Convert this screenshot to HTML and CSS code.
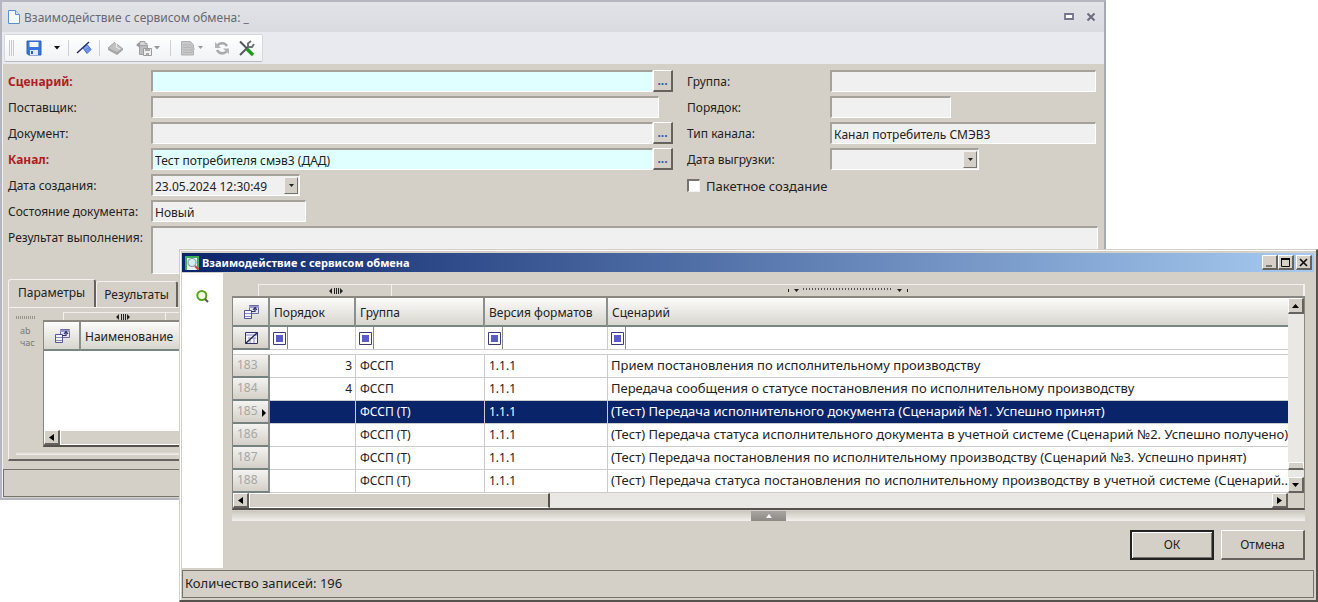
FILE: index.html
```html
<!DOCTYPE html>
<html lang="ru">
<head>
<meta charset="utf-8">
<title>Взаимодействие с сервисом обмена</title>
<link rel="stylesheet" href="styles.css">
</head>
<body>
<svg class="defs" aria-hidden="true">
  <symbol id="chooser" viewBox="0 0 16 16">
    <path d="M6.500 1.500h9v8h-9z" fill="#e6e6f4" stroke="#6a6aa4"/>
    <path d="M6 2h10v2H6z" fill="#9a9ac8"/>
    <path d="M1.500 6.500h7v8h-7z" fill="#f4f4fb" stroke="#55558f"/>
    <path d="M2 9h6v1H2zM2 12h6v1H2z" fill="#8a8abc"/>
    <path d="M8 7.500h4V5M10 6l2-2.500L14 6" fill="none" stroke="#303068" stroke-width="1.200"/>
  </symbol>
  <symbol id="filter" viewBox="0 0 16 16">
    <path d="M2.500 2.500h12v11h-12z" fill="#f2f2fa" stroke="#33336e"/>
    <path d="M3 5h11M5 8h8M7 10v3M11 8v5" stroke="#8c8cc0" fill="none"/>
    <path d="M2.500 13.500l12-11" stroke="#222258" stroke-width="1.400"/>
  </symbol>
  <symbol id="mode" viewBox="0 0 13 13">
    <path d="M.5.5h12v12H.5z" fill="#fff" stroke="#3c3c7c"/>
    <path d="M3 3h7v7H3z" fill="#5c5cc8"/>
  </symbol>
</svg>

<main class="desktop">
<section class="doc">
  <header class="doc-title">
    <svg width="14" height="16" viewBox="0 0 14 16"><path d="M1.500 1.500h7l4 4v9h-11z" fill="#f4faff" stroke="#5d8fd0"/><path d="M8.500 1.500v4h4" fill="#cfe2f8" stroke="#5d8fd0"/></svg>
    <span class="doc-name">Взаимодействие с сервисом обмена: _</span>
    <button class="plain" aria-label="Развернуть"><svg width="10" height="10" viewBox="0 0 10 10"><path d="M1 2h8v5H1z" fill="#fff" stroke="#74748a" stroke-width="1.800"/></svg></button>
    <button class="plain" aria-label="Закрыть"><svg width="10" height="10" viewBox="0 0 10 10"><path d="M1.500 1.500l7 7M8.500 1.500l-7 7" stroke="#6c6c82" stroke-width="2"/></svg></button>
  </header>
  <div class="toolbar-row">
    <div class="toolbar">
      <span class="grip"></span>
      <button class="tool" aria-label="Сохранить"><svg width="16" height="16" viewBox="0 0 16 16"><path d="M1 1h14v14H2.500L1 13.500z" fill="#3a76d8" stroke="#2f5fb8"/><path d="M3.500 2h9v5h-9z" fill="#f2f7ff"/><path d="M4 10h8v5H4z" fill="#dfe9f8"/><path d="M5 11h2v3H5z" fill="#2f5fb8"/></svg></button>
      <button class="tool arrow" aria-label="Варианты сохранения"><svg width="6" height="4" viewBox="0 0 6 4"><path d="M0 0h6L3 3.500z" fill="#111"/></svg></button>
      <span class="sep"></span>
      <button class="tool" aria-label="Очистить"><svg width="16" height="16" viewBox="0 0 16 16"><path d="M7 8l4-3.500L15 9.500l-4 4z" fill="#7da5ea" stroke="#4268c8"/><path d="M1 13L13 2" stroke="#2a2a78" stroke-width="1.500"/><path d="M9 10l4-2M10 12l4-3" stroke="#4268c8" stroke-width=".6"/></svg></button>
      <span class="sep"></span>
      <button class="tool" aria-label="Печать"><svg width="18" height="16" viewBox="0 0 18 16"><path d="M1 8l7-6 3 3 5 4-6 5z" fill="#c2c2c2" stroke="#a2a2a2"/><path d="M8 2l2 2-1 3 4 2" fill="none" stroke="#efefef"/><path d="M1 8l9 4 6-4v2l-6 5-9-5z" fill="#a6a6a6"/></svg></button>
      <button class="tool wide" aria-label="Выгрузить"><svg width="26" height="17" viewBox="0 0 26 17"><path d="M3 5V3.500h2V1.500h5v2h2V7" fill="#d6d6d6" stroke="#a2a2a2"/><path d="M4.500 5.500h8v9h-8z" fill="#bcbcbc" stroke="#a0a0a0"/><path d="M1 5l4-3v6z" fill="#999"/><path d="M8.500 8.500h8v7h-8z" fill="#eee" stroke="#9c9c9c"/><path d="M10 9h5v2h-5zM11 13h3v2h-3z" fill="#aaa"/><path d="M19 6h6l-3 3.500z" fill="#999"/></svg></button>
      <span class="sep"></span>
      <button class="tool wide" aria-label="Отчёт"><svg width="24" height="16" viewBox="0 0 24 16"><path d="M1.500 1.500h9l3 3.500v10h-12z" fill="#c8c8c8" stroke="#b0b0b0"/><path d="M3 5h8M3 7.500h9M3 10h9M3 12.500h9" stroke="#b4b4b4"/><path d="M11 5l4 4-4 5z" fill="#bdbdbd"/><path d="M18 6h5l-2.500 3z" fill="#999"/></svg></button>
      <button class="tool" aria-label="Обновить"><svg width="16" height="16" viewBox="0 0 16 16"><path d="M13 6C11 2.500 6 2 3 6M3 10c2 4 7 4.500 10 1" fill="none" stroke="#aaa" stroke-width="2.600"/><path d="M1 2v6h6zM15 14V8.500H9z" fill="#b4b4b4"/></svg></button>
      <button class="tool" aria-label="Настройка"><svg width="17" height="17" viewBox="0 0 17 17"><path d="M2 15L11 6" stroke="#555a60" stroke-width="2"/><path d="M10 6.500V3.500L13 1M11 7h3l2-3" fill="none" stroke="#70757a" stroke-width="2"/><path d="M2 1.500l7 7" stroke="#555" stroke-width="2"/><path d="M9 9l6 6" stroke="#1b9a1b" stroke-width="3.400"/></svg></button>
    </div>
  </div>

  <form class="form">
    <div class="col">
      <div class="line"><label class="req" for="f1">Сценарий:</label><input id="f1" class="fld key"><button type="button" class="dots" aria-label="Выбрать сценарий">...</button></div>
      <div class="line"><label for="f2">Поставщик:</label><input id="f2" class="fld short" readonly></div>
      <div class="line"><label for="f3">Документ:</label><input id="f3" class="fld" readonly><button type="button" class="dots" aria-label="Выбрать документ">...</button></div>
      <div class="line"><label class="req" for="f4">Канал:</label><input id="f4" class="fld key" value="Тест потребителя смэв3 (ДАД)"><button type="button" class="dots" aria-label="Выбрать канал">...</button></div>
      <div class="line"><label for="f5">Дата создания:</label><span class="fld combo"><input id="f5" value="23.05.2024 12:30:49" readonly><button type="button" aria-label="Открыть календарь"><svg width="5" height="3" viewBox="0 0 5 3"><path d="M0 0h5L2.500 3z" fill="#222"/></svg></button></span></div>
      <div class="line"><label for="f6">Состояние документа:</label><input id="f6" class="fld state" value="Новый" readonly></div>
    </div>
    <div class="col">
      <div class="line"><label for="g1">Группа:</label><input id="g1" class="fld" readonly></div>
      <div class="line"><label for="g2">Порядок:</label><input id="g2" class="fld order" readonly></div>
      <div class="line"><label for="g3">Тип канала:</label><input id="g3" class="fld" value="Канал потребитель СМЭВ3" readonly></div>
      <div class="line"><label for="g4">Дата выгрузки:</label><span class="fld combo"><input id="g4" readonly><button type="button" aria-label="Открыть календарь"><svg width="5" height="3" viewBox="0 0 5 3"><path d="M0 0h5L2.500 3z" fill="#222"/></svg></button></span></div>
      <div class="line"><input type="checkbox" id="g5" class="check"><label class="check-label" for="g5">Пакетное создание</label></div>
    </div>
    <div class="line result"><label for="f7">Результат выполнения:</label><textarea id="f7" class="fld" readonly></textarea></div>
  </form>

  <div class="tabs">
    <button class="tab active">Параметры</button><button class="tab">Результаты</button>
  </div>
  <div class="panel">
    <div class="panel-body">
      <div class="side-tools">
        <span class="hgrip"></span>
        <button class="plain replace" aria-label="Замена текста"><span>ab</span><span>час</span></button>
      </div>
      <div class="params">
        <div class="strip"><span class="strip-cell"><svg width="14" height="6" viewBox="0 0 14 6"><path d="M0 3l3-3v6zM14 3l-3-3v6zM5 0h1v6H5zM7 0h1v6H7zM9 0h1v6H9z" fill="#222"/></svg></span></div>
        <div class="grid-box">
          <table class="grid">
            <thead><tr><th class="c-row"><svg width="16" height="16"><use href="#chooser"/></svg></th><th>Наименование</th></tr></thead>
          </table>
          <div class="params-empty"></div>
          <div class="hscroll"><button class="sb" aria-label="Влево"><svg width="5" height="7" viewBox="0 0 5 7"><path d="M5 0v7L0 3.500z"/></svg></button><span class="thumb full"></span></div>
        </div>
      </div>
    </div>
    <div class="splitter thin"></div>
  </div>
  <footer class="status doc-status"></footer>
</section>

<section class="dialog">
  <header class="dlg-title">
    <svg width="14" height="14" viewBox="0 0 14 14"><path d="M0 0h14v14H0z" fill="#3cae55"/><path d="M2 2h10v12H2z" fill="#e8f4f6"/><circle cx="7" cy="6.500" r="4" fill="#d4eef8" stroke="#8a9ca8" stroke-width="1.200"/><path d="M10 10l3.500 3.500" stroke="#d2453c" stroke-width="2.200"/></svg>
    <h1>Взаимодействие с сервисом обмена</h1>
    <div class="win-btns">
      <button class="wb" aria-label="Свернуть"><svg width="9" height="9" viewBox="0 0 9 9"><path d="M1 7h6v2H1z" fill="#777"/></svg></button>
      <button class="wb" aria-label="Развернуть"><svg width="9" height="9" viewBox="0 0 9 9"><path d="M.5 0v8.500h8V0z" fill="none" stroke="#111"/><path d="M0 0h9v2H0z"/></svg></button>
      <button class="wb close" aria-label="Закрыть"><svg width="9" height="9" viewBox="0 0 9 9"><path d="M1 1l7 7M8 1L1 8" stroke="#111" stroke-width="1.700"/></svg></button>
    </div>
  </header>
  <div class="dlg-main">
    <aside class="dlg-side"><button class="plain" aria-label="Поиск"><svg width="13" height="13" viewBox="0 0 13 13"><circle cx="5.800" cy="5.500" r="4.500" fill="#f4fbe8" stroke="#57a51c" stroke-width="2"/><path d="M9 9l3 3" stroke="#555" stroke-width="2"/></svg></button></aside>
    <div class="dlg-content">
      <div class="strip">
        <span class="strip-cell"><svg width="14" height="6" viewBox="0 0 14 6"><path d="M0 3l3-3v6zM14 3l-3-3v6zM5 0h1v6H5zM7 0h1v6H7zM9 0h1v6H9z" fill="#222"/></svg></span>
        <span class="strip-cell rest"><svg width="120" height="5" viewBox="0 0 120 5"><path d="M0 1h1v3H0zM6 1h5L8.500 4zM109 1h5l-2.500 3zM119 1h1v3h-1z" fill="#222"/><path d="M15 1h90" stroke="#555" stroke-width="2" stroke-dasharray="1 2"/></svg></span>
      </div>
      <div class="grid-box">
        <div class="grid-area">
          <table class="grid">
            <thead>
              <tr><th class="c-row"><svg width="16" height="16"><use href="#chooser"/></svg></th><th class="c-ord">Порядок</th><th class="c-grp">Группа</th><th class="c-ver">Версия форматов</th><th>Сценарий</th></tr>
            </thead>
            <tbody>
              <tr class="filters"><td class="num pic"><svg width="16" height="16"><use href="#filter"/></svg></td><td><span><svg width="13" height="13"><use href="#mode"/></svg></span></td><td><span><svg width="13" height="13"><use href="#mode"/></svg></span></td><td><span><svg width="13" height="13"><use href="#mode"/></svg></span></td><td><span><svg width="13" height="13"><use href="#mode"/></svg></span></td></tr>
              <tr class="gap"><td colspan="5"></td></tr>
              <tr><td class="num">183</td><td class="r">3</td><td>ФССП</td><td>1.1.1</td><td class="scn">Прием постановления по исполнительному производству</td></tr>
              <tr><td class="num">184</td><td class="r">4</td><td>ФССП</td><td>1.1.1</td><td class="scn">Передача сообщения о статусе постановления по исполнительному производству</td></tr>
              <tr class="sel"><td class="num">185 <svg width="4" height="8" viewBox="0 0 4 8"><path d="M0 0v8l4-4z"/></svg></td><td></td><td>ФССП (Т)</td><td>1.1.1</td><td class="scn">(Тест) Передача исполнительного документа (Сценарий №1. Успешно принят)</td></tr>
              <tr><td class="num">186</td><td></td><td>ФССП (Т)</td><td>1.1.1</td><td class="scn">(Тест) Передача статуса исполнительного документа в учетной системе (Сценарий №2. Успешно получено)</td></tr>
              <tr><td class="num">187</td><td></td><td>ФССП (Т)</td><td>1.1.1</td><td class="scn">(Тест) Передача постановления по исполнительному производству (Сценарий №3. Успешно принят)</td></tr>
              <tr><td class="num">188</td><td></td><td>ФССП (Т)</td><td>1.1.1</td><td class="scn fill">(Тест) Передача статуса постановления по исполнительному производству в учетной системе (Сценарий..</td></tr>
            </tbody>
          </table>
          <div class="vscroll">
            <button class="sb" aria-label="Вверх"><svg width="7" height="4" viewBox="0 0 7 4"><path d="M0 4h7L3.500 0z"/></svg></button>
            <span class="vtrack"></span><span class="vthumb"></span><span class="vtail"></span>
            <button class="sb" aria-label="Вниз"><svg width="7" height="4" viewBox="0 0 7 4"><path d="M0 0h7L3.500 4z"/></svg></button>
          </div>
        </div>
        <div class="hscroll">
          <button class="sb" aria-label="Влево"><svg width="5" height="7" viewBox="0 0 5 7"><path d="M5 0v7L0 3.500z"/></svg></button>
          <span class="thumb"></span><span class="track"></span>
          <button class="sb" aria-label="Вправо"><svg width="5" height="7" viewBox="0 0 5 7"><path d="M0 0v7l5-3.500z"/></svg></button>
          <span class="corner"></span>
        </div>
      </div>
      <div class="splitter"><button class="fold" aria-label="Свернуть панель"><svg width="6" height="4" viewBox="0 0 6 4"><path d="M0 4h6L3 0z" fill="#fff"/></svg></button></div>
      <div class="actions"><button class="btn default">ОК</button><button class="btn">Отмена</button></div>
    </div>
  </div>
  <footer class="status count">Количество записей: 196</footer>
</section>
</main>
</body>
</html>
```
FILE: styles.css
```css
* { box-sizing: border-box; }
body { margin: 0; background: #fff; color: #222; font: 12px/18px "Noto Sans", "Open Sans", sans-serif; }
button, input, textarea { font: inherit; color: inherit; border-radius: 0; margin: 0; }
button { padding: 0; }
svg { display: block; flex: none; }
.defs { position: absolute; width: 0; height: 0; }
.desktop { position: relative; min-height: 602px; overflow: hidden; }
.plain { border: 0; background: none; display: flex; align-items: center; }

.doc { position: absolute; left: 0; top: 0; right: 212px; background: #d4d0c8; border: 2px solid #b4b6c0; border-right-color: #a6a8b4; box-shadow: inset 1px 1px #f0f0f4; }
.doc-title { height: 30px; display: flex; align-items: center; gap: 3px; padding: 0 8px 0 5px; background: linear-gradient(#e2e3e7, #dadbe0); color: #686872; }
.doc-name { flex: 1; padding-top: 1px; }
.doc-title .plain { margin-left: 9px; }
.toolbar-row { background: #e9eaef; padding: 2px 2px 1px; height: 32px; }
.toolbar { display: inline-flex; align-items: center; height: 28px; padding: 0 3px 0 4px; background: linear-gradient(#fff, #f1f2f5); border: 1px solid #d6d8de; border-bottom-color: #b8bac2; border-radius: 2px; }
.tool { border: 0; background: none; margin: 0 4px; display: flex; }
.tool.arrow { margin: 0 5px 0 8px; }
.tool.wide { margin: 0 6px; }
.grip { width: 6px; height: 16px; margin-right: 7px; background: repeating-linear-gradient(90deg, #c8c8ce 0 1px, #fafafa 1px 2px); }
.sep { width: 1px; height: 16px; margin: 0 3px; background: #cfd0d6; }

.form { display: grid; grid-template-columns: 665px 1fr; column-gap: 14px; padding: 5px 8px 0 6px; }
.col { display: flex; flex-direction: column; gap: 2px; }
.line { display: flex; align-items: center; height: 24px; }
.line label { width: 143px; flex: none; white-space: nowrap; padding-top: 1px; }
.line .req { color: #ae1c24; font-weight: bold; }
.fld { flex: 1; min-width: 0; height: 22px; padding: 2px 2px 0; background: #f0f0f0; border: 1px solid #fff; border-top: 2px solid #a5a19b; border-left: 2px solid #a5a19b; outline: 0; resize: none; }
.key { background: #e0ffff; }
.fld.short { margin-right: 14px; }
.fld.state { flex: 0 0 155px; }
.fld.order { flex: 0 0 121px; }
.dots { width: 20px; height: 22px; background: #d4d0c8; border: 1px solid #fff; border-right: 2px solid #66625e; border-bottom: 2px solid #66625e; color: #2c5cb0; font-weight: bold; line-height: 14px; }
.combo { flex: 0 0 149px; display: flex; padding: 0; }
.combo input { flex: 1; min-width: 0; border: 0; background: none; padding: 2px 2px 0; outline: 0; }
.combo button { width: 14px; margin: 1px; background: #d4d0c8; border: 1px solid #f4f2ee; border-right-color: #77736e; border-bottom-color: #77736e; display: flex; align-items: center; justify-content: center; }
.check { appearance: none; width: 13px; height: 13px; background: #fff; border: 1px solid #f4f2ee; border-top: 2px solid #77736e; border-left: 2px solid #77736e; }
.line .check-label { width: auto; margin-left: 6px; font-size: 13px; }
.result { grid-column: 1 / -1; height: auto; align-items: flex-start; margin: 3px -2px 0 0; }
.result label { padding-top: 3px; }
.result .fld { height: 48px; }

.tabs { display: flex; align-items: flex-end; margin: 5px 6px 0; height: 28px; }
.tab { height: 26px; padding: 0 7px; background: #d4d0c8; border: 1px solid #f4f2ee; border-right: 2px solid #66625e; border-bottom: 0; border-radius: 3px 3px 0 0; }
.tab.active { height: 28px; padding: 0 9px 2px; }
.panel { margin: 0 6px; padding: 4px 6px 4px 7px; border: 1px solid #f4f2ee; border-right: 2px solid #66625e; border-bottom: 2px solid #66625e; }
.panel-body { display: flex; gap: 7px; }
.side-tools { width: 20px; padding-top: 4px; }
.hgrip { display: block; height: 3px; background: repeating-linear-gradient(90deg, #98948e 0 1px, #d4d0c8 1px 2px); }
.replace { flex-direction: column; align-items: flex-start; margin: 6px 0 0 4px; font-size: 9px; line-height: 12px; color: #7c7872; }
.replace span { display: block; height: 12px; }
.params { flex: 1; min-width: 0; }
.params .strip { height: 8px; margin-left: 20px; }
.params .strip-cell { width: 102px; padding-left: 16px; }
.params-empty { height: 79px; background: #fff; }
.splitter { height: 10px; margin-top: 1px; background: linear-gradient(#cbc7c0, #f3f0ed); display: flex; justify-content: center; }
.splitter.thin { height: 4px; margin-top: 4px; }
.status { border: 1px solid #77736e; height: 28px; padding: 0 2px; line-height: 24px; }
.count { font-size: 13px; }
.doc-status { margin: 8px 1px 1px; }

.strip { display: flex; border: 1px solid #f2f0ec; border-bottom: 0; }
.strip-cell { display: flex; align-items: center; justify-content: center; border-right: 1px solid #f2f0ec; }
.grid-box { border: 2px solid #8a8680; border-bottom-color: #55524e; border-right-width: 1px; border-left-width: 1px; }
.grid-box, .grid-area { min-width: 0; }
.grid-area { display: flex; background: #fff; }
.grid { flex: 1; min-width: 0; width: 100%; table-layout: fixed; border-collapse: separate; border-spacing: 0; }
.grid th { height: 29px; padding: 2px 4px 0; text-align: left; font-weight: normal; white-space: nowrap; background: linear-gradient(#fcfcfb, #d8d5ce); border-right: 2px solid #8a908e; border-bottom: 2px solid #7a8683; }
.grid th:last-child { border-right: 0; }
.grid .c-row { width: 37px; padding: 0 0 0 10px; }
.c-ord { width: 86px; }
.c-grp { width: 129px; }
.c-ver { width: 123px; }
.grid td { height: 23px; padding: 0 3px 1px 4px; line-height: 18px; white-space: nowrap; overflow: hidden; border-right: 1px solid #ccc; border-bottom: 1px solid #ccc; }
.grid td:last-child { border-right: 0; }
.grid .num { color: #a8a6a2; background: linear-gradient(#f4f3f1, #d4d0c8); border-right: 2px solid #8c908e; border-bottom: 2px solid #76827f; }
.num svg { display: inline-block; margin-left: 1px; vertical-align: -2px; }
.grid .pic { padding: 0 0 0 10px; }
.pic svg { display: block; margin: 0; }
.grid .r { text-align: right; }
.grid .scn { font-size: 13px; padding: 0 0 2px 3px; }
.grid .filters td:not(.num) { padding: 0; }
.filters span { display: flex; align-items: center; width: 18px; height: 22px; padding-left: 3px; border-right: 1px solid #888; }
.grid .gap td { height: 5px; padding: 0; line-height: 0; }
.sel td:not(.num) { background: #0a246a; color: #fff; }
.grid .fill { text-align-last: justify; }

.sb { width: 16px; height: 16px; flex: none; background: #d4d0c8; border: 1px solid #fff; border-right: 2px solid #66625e; border-bottom: 2px solid #66625e; display: flex; align-items: center; justify-content: center; }
.vscroll { width: 16px; display: flex; flex-direction: column; background: #eae8e4; }
.vtrack { flex: 1; }
.vthumb { height: 8px; background: #d4d0c8; border: 1px solid #fff; border-bottom: 2px solid #66625e; }
.vtail { height: 7px; }
.hscroll { display: flex; height: 15px; background: #eae8e4; }
.hscroll .sb { height: 15px; }
.thumb { width: 301px; background: #d4d0c8; border: 1px solid #fff; border-right: 2px solid #55524e; }
.thumb.full { flex: 1; }
.track { flex: 1; }
.corner { width: 16px; background: #d4d0c8; }

.dialog { position: absolute; left: 179px; right: 0; top: 249px; background: #d4d0c8; border: 1px solid #d4d0c8; border-right: 2px solid #55524e; border-bottom: 2px solid #55524e; box-shadow: inset 1px 1px #fff; padding: 3px 2px 2px; }
.dlg-title { height: 19px; display: flex; align-items: center; gap: 3px; padding: 0 2px 0 3px; background: linear-gradient(90deg, #0a246a, #a6caf0); color: #fff; }
.dlg-title h1 { flex: 1; margin: 0; font-size: 11px; line-height: 18px; }
.win-btns { display: flex; }
.wb { width: 16px; height: 15px; background: #d4d0c8; border: 1px solid #fff; border-right: 2px solid #66625e; border-bottom: 2px solid #66625e; display: flex; align-items: center; justify-content: center; }
.wb.close { margin-left: 2px; }
.dlg-main { display: flex; margin-top: 1px; }
.dlg-side { width: 41px; background: #fff; padding: 17px 0 0 14px; }
.dlg-content { flex: 1; min-width: 0; padding: 11px 9px 8px; }
.dlg-content .strip { height: 12px; margin-left: 26px; }
.dlg-content .strip-cell { width: 133px; padding-left: 22px; }
.dlg-content .rest { flex: 1; width: auto; padding: 0; }
.fold { width: 35px; height: 10px; border: 0; background: linear-gradient(#a8a5a0, #8c8985); display: flex; align-items: center; justify-content: center; }
.actions { display: flex; justify-content: flex-end; gap: 7px; margin-top: 9px; }
.btn { width: 84px; height: 30px; background: #d4d0c8; border: 1px solid #fff; border-right: 2px solid #66625e; border-bottom: 2px solid #66625e; }
.btn.default { border: 2px solid #222; box-shadow: inset 1px 1px #fff, inset -1px -1px #77736e; }
.dialog .status { margin-top: 2px; }
```
